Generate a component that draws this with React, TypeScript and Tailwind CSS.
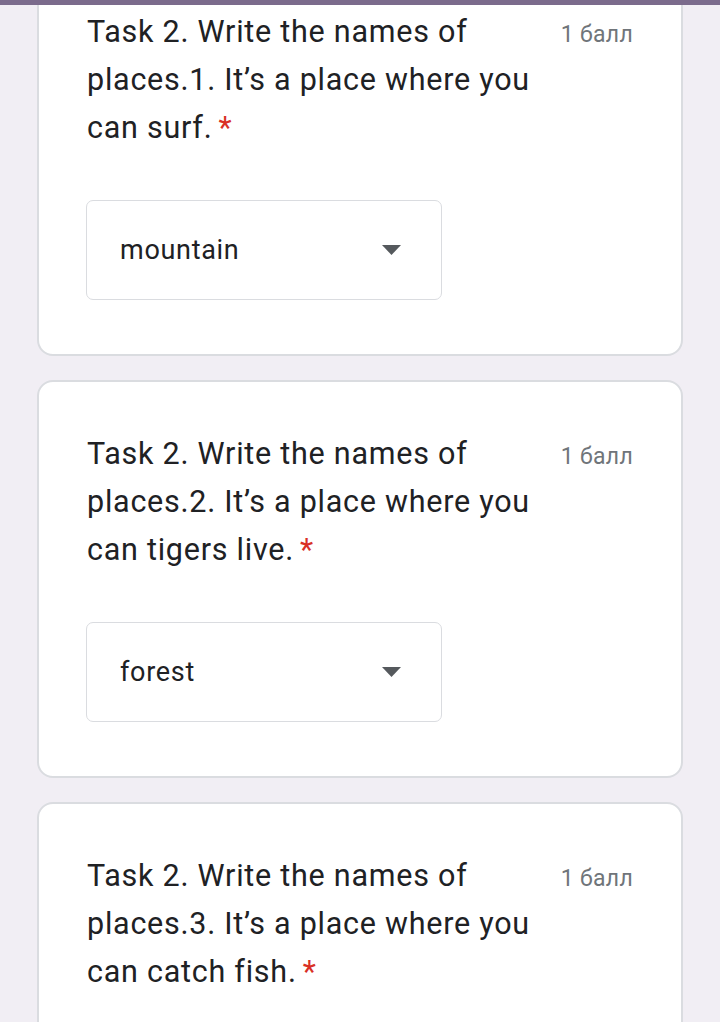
import React from "react";

const items = [
  { text: ["Task 2. Write the names of", "places.1. It’s a place where you", "can surf."], answer: "mountain" },
  { text: ["Task 2. Write the names of", "places.2. It’s a place where you", "can tigers live."], answer: "forest" },
  { text: ["Task 2. Write the names of", "places.3. It’s a place where you", "can catch fish."], answer: "" },
];

function Card({ item, first }: { item: (typeof items)[number]; first?: boolean }) {
  return (
    <div
      className={`bg-white border-2 border-[#dadce0] rounded-[16px] pl-[47px] pr-[48px] pt-[48px] pb-[54px] ${first ? "-mt-[42px]" : ""}`}
    >
      <div className="flex items-start justify-between">
        <div className="pl-[1px] text-[30.5px] leading-[48px] text-[#202124] tracking-[0.75px]">
          {item.text.map((t, i) => (
            <div key={i}>
              {t}
              {i === item.text.length - 1 && <span className="text-[#d93025] ml-[6px]">*</span>}
            </div>
          ))}
        </div>
        <div className="pt-[3px] text-[23px] leading-[48px] text-[#70757a] whitespace-nowrap tracking-[0.3px]">1 балл</div>
      </div>
      {item.answer && (
        <div className="mt-[48px] w-[356px] h-[100px] border-[1.5px] border-[#dadce0] rounded-[7px] flex items-center justify-between pl-[33px] pr-[40px]">
          <span className="text-[27px] text-[#202124] tracking-[0.7px]">{item.answer}</span>
          <svg width="19" height="10" viewBox="0 0 19 10">
            <path d="M0 0 L19 0 L9.5 10 Z" fill="#55595d" />
          </svg>
        </div>
      )}
    </div>
  );
}

export default function App() {
  return (
    <div
      className="relative w-[720px] h-[1022px] overflow-hidden bg-[#f1eef4]"
      style={{ fontFamily: "Roboto, 'Noto Sans', sans-serif" }}
    >
      <div className="absolute top-0 left-0 right-0 h-[5px] bg-[#7b6b8c] z-10" />
      <div className="flex flex-col gap-[24px] px-[37px]">
        <Card item={items[0]} first />
        <Card item={items[1]} />
        <Card item={items[2]} />
      </div>
    </div>
  );
}
